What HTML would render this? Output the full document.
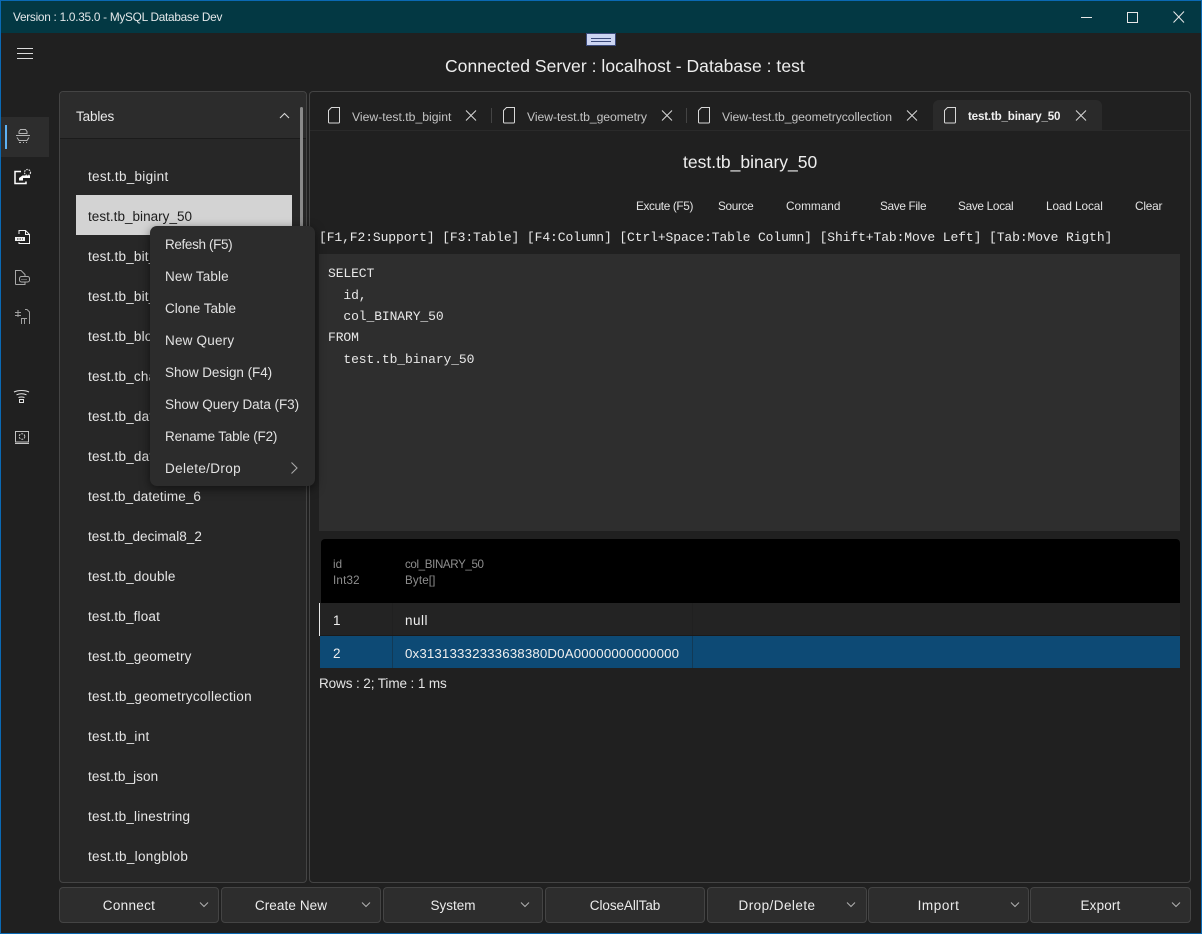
<!DOCTYPE html>
<html><head><meta charset="utf-8"><title>MySQL Database Dev</title>
<style>
html,body{margin:0;padding:0;background:#202020}
#w{position:relative;width:1202px;height:934px;overflow:hidden;background:#202020;font-family:"Liberation Sans",sans-serif;color:#e8e8e8;font-size:13.5px}
#w div,#w svg{position:absolute;box-sizing:border-box}
.t{white-space:nowrap;line-height:20px;height:20px}
.li{left:88px;color:#e6e6e6;letter-spacing:.2px}
.b{top:887px;height:36px;background:#2d2d2d;border:1px solid #444;border-radius:4px;text-align:center;line-height:36px;font-size:13.5px;color:#ececec}
.tb{top:196px;font-size:11.8px;color:#e2e2e2}
.tab{top:107px;font-size:12.2px;color:#c4c4c4}
.m{left:165px;font-size:13.5px;color:#e2e2e2}
.mono{font-family:"Liberation Mono",monospace;font-size:13px;letter-spacing:-.1px;white-space:pre;color:#e8e8e8}
.sql{left:328px;height:22px;line-height:22px}
</style></head><body><div id="w">

<div style="left:0;top:0;width:1202px;height:33px;background:#033843"></div>
<div class="t" style="left:13px;top:7px;font-size:11.8px;letter-spacing:-.26px;color:#e4e8ea">Version : 1.0.35.0 - MySQL Database Dev</div>
<svg style="left:1070px;top:5px" width="125" height="24" fill="none" stroke="#e8e8e8" stroke-width="1">
<path d="M11 12.5H22"/><rect x="57.5" y="7.5" width="10" height="10"/><path d="M103.5 6.5L114 17.5M114 6.5L103.5 17.5"/></svg>

<div style="left:586px;top:33px;width:30px;height:13px;background:#ccd5f2;border:1px solid #3b4a7a"></div>
<div style="left:591px;top:38px;width:20px;height:1px;background:#3b4a7a"></div>
<div style="left:591px;top:41px;width:20px;height:1px;background:#3b4a7a"></div>

<svg style="left:17px;top:47px" width="17" height="13" fill="none" stroke="#dcdcdc" stroke-width="1"><path d="M0 1.5H16M0 6.5H16M0 11.5H16"/></svg>
<div class="t" style="left:445px;top:56px;font-size:17.5px;letter-spacing:.04px;color:#eee">Connected Server : localhost - Database : test</div>

<div style="left:1px;top:117px;width:48px;height:40px;background:#2d2d2d"></div>
<div style="left:5px;top:125px;width:2px;height:24px;background:#5fb1f2"></div>
<svg style="left:14px;top:128px" width="18" height="16" fill="none" stroke="#b4b4b4" stroke-width="1"><path d="M5 3.5L6.5 1.5H11.5L13 3.500V5.500H5ZM2 7.500H16M3 9.500L5 12.500H13L15 9.500M5 14.500H7M9 14.500H10M12 14.500H13"/></svg>
<svg style="left:13px;top:168px" width="20" height="18" fill="none" stroke="#fff" stroke-width="1.5"><path d="M8 3.500H2V15.500H13V13.500"/><path d="M6 10L9.500 7.500H17V10H10V12.500H6Z" fill="#fff" stroke="none"/><circle cx="14.500" cy="4.500" r="3" stroke="#ddd" stroke-width="1.200" stroke-dasharray="1.500 1"/></svg>
<svg style="left:13px;top:228px" width="20" height="18" fill="none" stroke="#f4f4f4" stroke-width="1"><path d="M6 6V2.500H12.500L16.500 6.500V15.500H6V14"/><path d="M12.500 2.500V6.500H16.500"/><rect x="2" y="9" width="10" height="4" fill="#f4f4f4" stroke="none"/><path d="M4 11H10" stroke="#222" stroke-dasharray="1.500 1"/></svg>
<svg style="left:13px;top:268px" width="20" height="18" fill="none" stroke="#a8a8a8" stroke-width="1"><path d="M2.500 16.500V2.500H8L12 6.500V8M2.500 16.500H12V14.500"/><rect x="6.500" y="8.500" width="10" height="5.500" rx="2"/><path d="M8.500 11.500H14.500" stroke-dasharray="1 1"/></svg>
<svg style="left:13px;top:308px" width="20" height="18" fill="none" stroke="#a0a0a0" stroke-width="1"><path d="M2 4.500H8M2 7.500H8M5 2V9M8 10.500H14M8.500 10.500V16M11.500 10.500V16M12 1.500H14L16.500 4V16"/></svg>
<svg style="left:13px;top:388px" width="18" height="18" fill="none" stroke="#e4e4e4" stroke-width="1"><path d="M1 4C5 2 12 2 16 4M3.500 6.800C6.500 5.500 10.500 5.500 13.500 6.800M5.500 9.500C7.500 8.800 9.500 8.800 11.500 9.500"/><rect x="6.500" y="11.500" width="4" height="3"/></svg>
<svg style="left:13px;top:428px" width="19" height="18" fill="none" stroke="#c4c4c4" stroke-width="1"><rect x="2.500" y="3.500" width="13" height="10.500"/><path d="M2 15.500H16"/><circle cx="9" cy="8.500" r="2.800" stroke-dasharray="2 1"/></svg>

<div style="left:59px;top:91px;width:248px;height:792px;background:#272727;border:1px solid #444;border-radius:4px"></div>
<div style="left:60px;top:92px;width:246px;height:47px;background:#2c2c2c;border-bottom:1px solid #1b1b1b;border-radius:4px 4px 0 0"></div>
<div class="t" style="left:76px;top:107px;letter-spacing:-.15px;color:#e8e8e8">Tables</div>
<svg style="left:279px;top:112px" width="11" height="8" fill="none" stroke="#d8d8d8" stroke-width="1.1"><path d="M1 6L5.500 1.500L10 6"/></svg>
<div style="left:300px;top:107px;width:3px;height:375px;background:#8a8a8a;border-radius:2px"></div>
<div style="left:76px;top:195px;width:216px;height:40px;background:#d3d3d3"></div>
<div class="t li" style="top:167px;letter-spacing:.28px">test.tb_bigint</div>
<div class="t li" style="top:207px;color:#1c1c1c;letter-spacing:.03px">test.tb_binary_50</div>
<div class="t li" style="top:247px">test.tb_bit_1</div>
<div class="t li" style="top:287px">test.tb_bit_8</div>
<div class="t li" style="top:327px">test.tb_blob</div>
<div class="t li" style="top:367px">test.tb_char</div>
<div class="t li" style="top:407px">test.tb_date</div>
<div class="t li" style="top:447px">test.tb_datetime</div>
<div class="t li" style="top:487px;letter-spacing:.11px">test.tb_datetime_6</div>
<div class="t li" style="top:527px;letter-spacing:.03px">test.tb_decimal8_2</div>
<div class="t li" style="top:567px">test.tb_double</div>
<div class="t li" style="top:607px;letter-spacing:.17px">test.tb_float</div>
<div class="t li" style="top:647px;letter-spacing:.19px">test.tb_geometry</div>
<div class="t li" style="top:687px;letter-spacing:.27px">test.tb_geometrycollection</div>
<div class="t li" style="top:727px;letter-spacing:.27px">test.tb_int</div>
<div class="t li" style="top:767px;letter-spacing:.1px">test.tb_json</div>
<div class="t li" style="top:807px;letter-spacing:.22px">test.tb_linestring</div>
<div class="t li" style="top:847px;letter-spacing:.3px">test.tb_longblob</div>

<div style="left:309px;top:91px;width:882px;height:792px;background:#202020;border:1px solid #444;border-radius:4px"></div>
<div style="left:310px;top:130px;width:880px;height:1px;background:#2a2a2a"></div>
<div style="left:933px;top:100px;width:169px;height:31px;background:#2a2a2a;border-radius:6px 6px 0 0"></div>
<svg style="left:320px;top:100px" width="800" height="30" fill="none" stroke="#d8d8d8" stroke-width="1">
<path d="M11.500 7.500H19.500V22C19.500 22.500 19 23 18.500 23H9.500C9 23 8.500 22.500 8.500 22V10.500Z"/>
<path d="M186.500 7.500H194.500V22C194.500 22.500 194 23 193.500 23H184.500C184 23 183.500 22.500 183.500 22V10.500Z"/>
<path d="M381.500 7.500H389.500V22C389.500 22.500 389 23 388.500 23H379.500C379 23 378.500 22.500 378.500 22V10.500Z"/>
<path d="M627.500 7.500H635.500V22C635.500 22.500 635 23 634.500 23H625.500C625 23 624.500 22.500 624.500 22V10.500Z"/>
<path d="M146 10.500L156 20.500M156 10.500L146 20.500M342 10.500L352 20.500M352 10.500L342 20.500M587 10.500L597 20.500M597 10.500L587 20.500M756 10.500L766 20.500M766 10.500L756 20.500"/>
<path d="M171.500 8V23M366.500 8V23" stroke="#444"/>
</svg>
<div class="t tab" style="left:352px">View-test.tb_bigint</div>
<div class="t tab" style="left:527px;letter-spacing:-.05px">View-test.tb_geometry</div>
<div class="t tab" style="left:722px;letter-spacing:-.06px">View-test.tb_geometrycollection</div>
<div class="t tab" style="left:968px;color:#f0f0f0;font-weight:bold;font-size:11.6px;letter-spacing:-.18px">test.tb_binary_50</div>

<div class="t" style="left:683px;top:152px;font-size:17.500px;color:#eee">test.tb_binary_50</div>

<div class="t tb" style="left:636px;letter-spacing:-.36px">Excute (F5)</div>
<div class="t tb" style="left:718px;letter-spacing:-.33px">Source</div>
<div class="t tb" style="left:786px">Command</div>
<div class="t tb" style="left:880px;letter-spacing:-.33px">Save File</div>
<div class="t tb" style="left:958px;letter-spacing:-.3px">Save Local</div>
<div class="t tb" style="left:1046px;letter-spacing:-.1px">Load Local</div>
<div class="t tb" style="left:1135px;letter-spacing:-.2px">Clear</div>

<div class="mono" style="left:319px;top:228px;height:20px;line-height:20px">[F1,F2:Support] [F3:Table] [F4:Column] [Ctrl+Space:Table Column] [Shift+Tab:Move Left] [Tab:Move Rigth]</div>

<div style="left:319px;top:254px;width:861px;height:277px;background:#2e2e2e"></div>
<div class="mono sql" style="top:263px">SELECT</div>
<div class="mono sql" style="top:285px">  id,</div>
<div class="mono sql" style="top:306px">  col_BINARY_50</div>
<div class="mono sql" style="top:327px">FROM</div>
<div class="mono sql" style="top:349px">  test.tb_binary_50</div>

<div style="left:321px;top:539px;width:859px;height:64px;background:#000;border-radius:4px 4px 0 0"></div>
<div class="t" style="left:333px;top:555px;font-size:11.600px;color:#8e8e8e">id</div>
<div class="t" style="left:333px;top:571px;font-size:11.600px;letter-spacing:.2px;color:#8e8e8e">Int32</div>
<div class="t" style="left:405px;top:555px;font-size:11.600px;letter-spacing:-.38px;color:#8e8e8e">col_BINARY_50</div>
<div class="t" style="left:405px;top:571px;font-size:11.600px;letter-spacing:.15px;color:#8e8e8e">Byte[]</div>
<div style="left:320px;top:603px;width:860px;height:33px;background:#232323;border-bottom:1px solid #1a1a1a"></div>
<div style="left:320px;top:636px;width:860px;height:32px;background:#0d4a75"></div>
<div style="left:319px;top:603px;width:1px;height:33px;background:#e8e8e8"></div>
<div style="left:392px;top:603px;width:1px;height:65px;background:#1c1c1c;opacity:.35"></div>
<div style="left:692px;top:603px;width:1px;height:65px;background:#1c1c1c;opacity:.35"></div>
<div class="t" style="left:333px;top:611px;color:#eee">1</div>
<div class="t" style="left:405px;top:611px;letter-spacing:.5px;color:#eee">null</div>
<div class="t" style="left:333px;top:644px;color:#eee">2</div>
<div class="t" style="left:405px;top:644px;color:#eee;font-size:13.300px;letter-spacing:.14px">0x31313332333638380D0A00000000000000</div>
<div class="t" style="left:319px;top:674px;letter-spacing:-.1px;color:#e4e4e4">Rows : 2; Time : 1 ms</div>

<div style="left:150px;top:226px;width:165px;height:260px;background:#2c2c2c;border-radius:7px;box-shadow:0 3px 10px rgba(0,0,0,.55)"></div>
<div class="t m" style="top:235px;letter-spacing:-.36px">Refesh (F5)</div>
<div class="t m" style="top:267px;letter-spacing:.1px">New Table</div>
<div class="t m" style="top:299px">Clone Table</div>
<div class="t m" style="top:331px;letter-spacing:.2px">New Query</div>
<div class="t m" style="top:363px;letter-spacing:-.06px">Show Design (F4)</div>
<div class="t m" style="top:395px;letter-spacing:-.05px">Show Query Data (F3)</div>
<div class="t m" style="top:427px;letter-spacing:-.18px">Rename Table (F2)</div>
<div class="t m" style="top:459px;letter-spacing:.36px">Delete/Drop</div>
<svg style="left:290px;top:461px" width="9" height="14" fill="none" stroke="#a8a8a8" stroke-width="1.100"><path d="M1.500 1.500L7 7L1.500 12.500"/></svg>

<div class="b" style="left:59px;width:160px;padding-right:20px;letter-spacing:.3px">Connect</div>
<div class="b" style="left:221px;width:160px;padding-right:20px;letter-spacing:.1px">Create New</div>
<div class="b" style="left:383px;width:160px;padding-right:20px">System</div>
<div class="b" style="left:545px;width:160px;letter-spacing:-.08px">CloseAllTab</div>
<div class="b" style="left:707px;width:160px;padding-right:20px;letter-spacing:.45px">Drop/Delete</div>
<div class="b" style="left:868px;width:161px;padding-right:20px;letter-spacing:.6px">Import</div>
<div class="b" style="left:1030px;width:161px;padding-right:20px;letter-spacing:.15px">Export</div>
<svg style="left:190px;top:900px" width="1000" height="10" fill="none" stroke="#b0b0b0" stroke-width="1"><path d="M10 2.500L14 6.500L18 2.500M172 2.500L176 6.500L180 2.500M331 2.500L335 6.500L339 2.500M657 2.500L661 6.500L665 2.500M821 2.500L825 6.500L829 2.500M982 2.500L986 6.500L990 2.500"/></svg>

<div style="left:0;top:0;width:1202px;height:934px;border:1px solid #0a69b4;pointer-events:none"></div>
</div></body></html>
